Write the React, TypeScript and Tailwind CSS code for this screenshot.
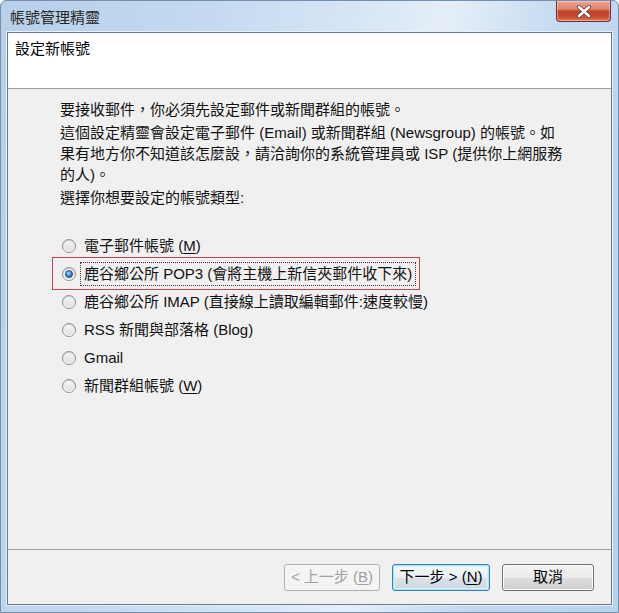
import { FC, ReactNode } from "react";

const FONT = "font-['Liberation_Sans','Noto_Sans_CJK_TC','Noto_Sans_CJK_JP',sans-serif]";

const options: { label: ReactNode; checked?: boolean }[] = [
    { label: <>電子郵件帳號 (<span className="underline underline-offset-2">M</span>)</> },
    { label: <>鹿谷鄉公所 POP3 (會將主機上新信夾郵件收下來)</>, checked: true },
    { label: <>鹿谷鄉公所 IMAP (直接線上讀取編輯郵件:速度較慢)</> },
    { label: <>RSS 新聞與部落格 (Blog)</> },
    { label: <>Gmail</> },
    { label: <>新聞群組帳號 (<span className="underline underline-offset-2">W</span>)</> },
];

const Radio: FC<{ checked?: boolean }> = ({ checked }) => (
    <span className="w-[14px] h-[14px] rounded-full border border-[#8c9096] bg-[linear-gradient(180deg,#d0d0d0_0%,#f0f0f0_60%,#ffffff_100%)] flex items-center justify-center shrink-0">
        <span className="w-[10px] h-[10px] rounded-full bg-[linear-gradient(180deg,#f6f6f6,#dedede)] flex items-center justify-center">
            {checked && (
                <span className="w-[8px] h-[8px] rounded-full border border-[#1b4f87] bg-[radial-gradient(circle_at_40%_35%,#a6e0fb_0%,#3f97d6_45%,#0f4e92_100%)]" />
            )}
        </span>
    </span>
);

const RadioRow: FC<{ label: ReactNode; checked?: boolean }> = ({ label, checked }) => (
    <div className="relative h-[28px] flex items-center pl-[2px] gap-[4px]">
        <Radio checked={checked} />
        <span
            className={`h-[24px] px-[3px] leading-[22px] border border-dotted whitespace-nowrap ${
                checked ? "border-[#3a3a3a]" : "border-transparent"
            }`}
        >
            {label}
        </span>
        {checked && (
            <span className="absolute -left-[8px] -top-[3px] w-[368px] h-[33px] border border-[#c8414b] pointer-events-none" />
        )}
    </div>
);

const CloseButton: FC = () => (
    <div className="self-start mr-[7px] w-[55px] h-[21px] rounded-b-[4px] border border-t-0 border-[#6e2e29] bg-[linear-gradient(180deg,#eba496_0%,#dc8371_40%,#c1402a_52%,#c94d32_80%,#de8059_100%)] shadow-[inset_0_0_0_1px_rgba(255,215,205,0.5)] flex items-center justify-center">
        <svg width="16" height="13" viewBox="0 0 16 13">
            <path d="M3 2 L13 11 M13 2 L3 11" stroke="#5a3b38" strokeWidth="4.2" strokeLinecap="round" />
            <path d="M3 2 L13 11 M13 2 L3 11" stroke="#ffffff" strokeWidth="2.6" strokeLinecap="round" />
        </svg>
    </div>
);

export default function App() {
    return (
        <div
            className={`${FONT} w-[619px] h-[613px] flex flex-col rounded-t-[6px] border border-[#7590ae] bg-[linear-gradient(100deg,#b7cfe9_0%,#c5daf1_30%,#dce9f7_55%,#e6eff9_62%,#c4d9f0_78%,#b9d2ec_100%)] overflow-hidden`}
        >
            <div className="h-[31px] flex items-center justify-between shrink-0">
                <span className="pl-[9px] pt-[2px] text-[15px] leading-[20px] text-[#262626]">帳號管理精靈</span>
                <CloseButton />
            </div>

            <div className="flex-1 mx-[6px] mb-[7px] border border-[#6b7786] shadow-[0_0_0_1px_#e8f1fb] flex flex-col">
                <div className="h-[56px] shrink-0 bg-white border-b border-[#a0a0a0] pl-[7px] pt-[6px]">
                    <div className="text-[15px] leading-[20px] text-black">設定新帳號</div>
                </div>

                <div className="flex-1 bg-[#f0f0f0] flex flex-col">
                    <div className="pl-[52px] pt-[10px] text-[15px] text-[#111] flex-1">
                        <p className="leading-[21px] whitespace-nowrap">要接收郵件，你必須先設定郵件或新聞群組的帳號。</p>
                        <p className="leading-[21px] mt-[2px] whitespace-nowrap">
                            這個設定精靈會設定電子郵件 (Email) 或新聞群組 (Newsgroup) 的帳號。如
                            <br />
                            果有地方你不知道該怎麼設，請洽詢你的系統管理員或 ISP (提供你上網服務
                            <br />
                            的人)。
                        </p>
                        <p className="leading-[21px] mt-[2px]">選擇你想要設定的帳號類型:</p>

                        <div className="mt-[24px] flex flex-col">
                            {options.map((o, i) => (
                                <RadioRow key={i} label={o.label} checked={o.checked} />
                            ))}
                        </div>
                    </div>

                    <div className="h-[55px] shrink-0 border-t border-[#a0a0a0] flex items-center justify-end gap-[12px] pr-[17px] text-[15px]">
                        <button className="w-[96px] h-[27px] rounded-[3px] border border-[#adb2b5] bg-[#f4f4f4] text-[#a0a0a0] leading-[20px]">
                            &lt; 上一步 (<span className="underline underline-offset-2">B</span>)
                        </button>
                        <button className="w-[98px] h-[27px] rounded-[3px] border border-[#3c7fb1] bg-[linear-gradient(180deg,#f4f8fa_0%,#e9eff3_50%,#dbe3e8_50%,#ced8de_100%)] shadow-[inset_0_0_0_1px_#a8e3fb,inset_0_0_0_2px_#d8f2fc] text-black leading-[20px]">
                            下一步 &gt; (<span className="underline underline-offset-2">N</span>)
                        </button>
                        <button className="w-[92px] h-[27px] rounded-[3px] border border-[#707070] bg-[linear-gradient(180deg,#f2f2f2_0%,#ebebeb_50%,#dddddd_50%,#cfcfcf_100%)] shadow-[inset_0_0_0_1px_#fcfcfc] text-black leading-[20px]">
                            取消
                        </button>
                    </div>
                </div>
            </div>
        </div>
    );
}
